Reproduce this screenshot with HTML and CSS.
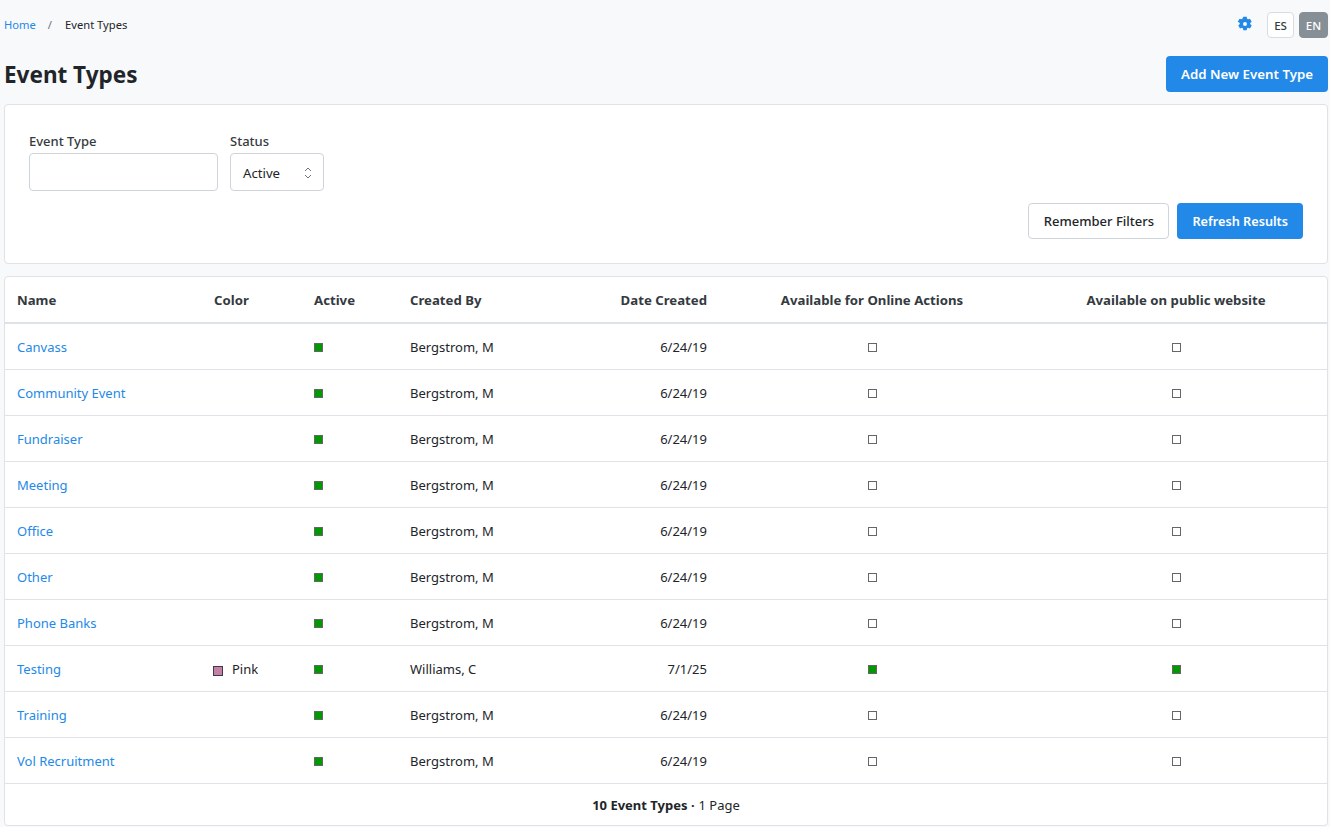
FILE: index.html
```html
<!DOCTYPE html>
<html lang="en">
<head>
<meta charset="utf-8">
<title>Event Types</title>
<link rel="stylesheet" href="styles.css">
</head>
<body>
<div class="page">
  <header class="topbar">
    <nav class="crumbs"><a href="#">Home</a><span class="sep">/</span><span>Event Types</span></nav>
    <div class="tools">
      <svg class="gear" viewBox="0 0 16 16" width="16" height="16" aria-hidden="true"><path fill="#2389e8" fill-rule="evenodd" d="M6.3.8h3.4l.4 2c.35.15.65.32.95.55l1.95-.65 1.7 2.95-1.5 1.35a4.4 4.4 0 0 1 0 1.1l1.5 1.35-1.7 2.95-1.95-.65c-.3.23-.6.4-.95.55l-.4 2H6.300l-.4-2a4.400 4.400 0 0 1-.95-.55l-1.950.65-1.700-2.950 1.500-1.350a4.400 4.400 0 0 1 0-1.100L.800 5.650l1.700-2.950 1.950.65c.3-.23.6-.4.95-.55zM8 6a2 2 0 1 0 0 4 2 2 0 0 0 0-4z"/></svg>
      <div class="langs"><button class="lang">ES</button><button class="lang lang-on">EN</button></div>
    </div>
  </header>
  <div class="titlebar">
    <h1>Event Types</h1>
    <button class="btn btn-primary btn-add">Add New Event Type</button>
  </div>
  <section class="card filters">
    <div class="fields">
      <label class="field"><span class="label">Event Type</span><input class="input" type="text"></label>
      <div class="field"><span class="label">Status</span>
        <div class="select">Active
          <svg viewBox="0 0 10 14" width="10" height="14" aria-hidden="true"><path d="M2 5l3-3 3 3M2 9l3 3 3-3" fill="none" stroke="#6b7280" stroke-width="1"/></svg>
        </div>
      </div>
    </div>
    <div class="actions">
      <button class="btn btn-plain">Remember Filters</button>
      <button class="btn btn-primary btn-refresh">Refresh Results</button>
    </div>
  </section>
  <section class="card results">
    <table>
      <colgroup><col class="c1"><col class="c2"><col class="c3"><col class="c4"><col class="c5"><col class="c6"><col class="c7"></colgroup>
      <thead><tr><th>Name</th><th>Color</th><th>Active</th><th>Created By</th><th class="r">Date Created</th><th class="m">Available for Online Actions</th><th class="m">Available on public website</th></tr></thead>
      <tbody>
        <tr><td><a href="#">Canvass</a></td><td></td><td><i class="box on"></i></td><td>Bergstrom, M</td><td class="r">6/24/19</td><td class="m"><i class="box"></i></td><td class="m"><i class="box"></i></td></tr>
        <tr><td><a href="#">Community Event</a></td><td></td><td><i class="box on"></i></td><td>Bergstrom, M</td><td class="r">6/24/19</td><td class="m"><i class="box"></i></td><td class="m"><i class="box"></i></td></tr>
        <tr><td><a href="#">Fundraiser</a></td><td></td><td><i class="box on"></i></td><td>Bergstrom, M</td><td class="r">6/24/19</td><td class="m"><i class="box"></i></td><td class="m"><i class="box"></i></td></tr>
        <tr><td><a href="#">Meeting</a></td><td></td><td><i class="box on"></i></td><td>Bergstrom, M</td><td class="r">6/24/19</td><td class="m"><i class="box"></i></td><td class="m"><i class="box"></i></td></tr>
        <tr><td><a href="#">Office</a></td><td></td><td><i class="box on"></i></td><td>Bergstrom, M</td><td class="r">6/24/19</td><td class="m"><i class="box"></i></td><td class="m"><i class="box"></i></td></tr>
        <tr><td><a href="#">Other</a></td><td></td><td><i class="box on"></i></td><td>Bergstrom, M</td><td class="r">6/24/19</td><td class="m"><i class="box"></i></td><td class="m"><i class="box"></i></td></tr>
        <tr><td><a href="#">Phone Banks</a></td><td></td><td><i class="box on"></i></td><td>Bergstrom, M</td><td class="r">6/24/19</td><td class="m"><i class="box"></i></td><td class="m"><i class="box"></i></td></tr>
        <tr><td><a href="#">Testing</a></td><td><span class="swatch"></span>Pink</td><td><i class="box on"></i></td><td>Williams, C</td><td class="r">7/1/25</td><td class="m"><i class="box on"></i></td><td class="m"><i class="box on"></i></td></tr>
        <tr><td><a href="#">Training</a></td><td></td><td><i class="box on"></i></td><td>Bergstrom, M</td><td class="r">6/24/19</td><td class="m"><i class="box"></i></td><td class="m"><i class="box"></i></td></tr>
        <tr><td><a href="#">Vol Recruitment</a></td><td></td><td><i class="box on"></i></td><td>Bergstrom, M</td><td class="r">6/24/19</td><td class="m"><i class="box"></i></td><td class="m"><i class="box"></i></td></tr>
      </tbody>
    </table>
    <footer class="summary"><b>10 Event Types ·</b> 1 Page</footer>
  </section>
</div>
</body>
</html>
```
FILE: styles.css
```css
* { box-sizing: border-box; }
html, body { margin: 0; padding: 0; }
body {
  background: #f8f9fb;
  color: #212529;
  font-family: "Noto Sans", "Open Sans", sans-serif;
  font-size: 13px;
  line-height: 18px;
}
a { color: #2389e8; text-decoration: none; }
.page { padding: 0 2px 0 4px; height: 827px; overflow: hidden; }
.topbar { display: flex; justify-content: space-between; align-items: center; height: 50px; }
.crumbs { font-size: 11.2px; display: flex; align-items: center; }
.sep { margin: 0 13px 0 12px; color: #6c757d; }
.tools { display: flex; align-items: center; gap: 14px; }
.gear { display: block; margin-top: -2px; }
.langs { display: flex; gap: 5px; }
.lang { width: 27px; height: 26px; padding: 0; border: 1px solid #d9dce1; border-radius: 4px; background: #fff; color: #343a40; font: 500 11.5px "Noto Sans", sans-serif; }
.lang-on { background: #868e96; border-color: #868e96; color: #fff; width: 29px; }
.titlebar { display: flex; justify-content: space-between; align-items: center; height: 36px; margin-top: 6px; margin-bottom: 12px; }
h1 { margin: 0; padding-top: 2px; font-size: 22.5px; line-height: 36px; font-weight: 700; }
.btn { height: 36px; border-radius: 4px; font: 500 13px "Noto Sans", sans-serif; padding: 0 14px; border: 1px solid transparent; cursor: pointer; white-space: nowrap; }
.btn-primary { background: #2389e8; color: #fff; }
.btn-add { width: 162px; font-size: 13.3px; font-weight: 600; }
.btn-refresh { font-size: 12.7px; font-weight: 600; }
.btn-plain { background: #fff; border-color: #ced4da; color: #212529; width: 141px; }
.card { background: #fff; border: 1px solid #dfe2e6; border-radius: 4px; }
.filters { height: 160px; padding: 26px 24px 24px; margin-bottom: 12px; }
.fields { display: flex; gap: 12px; }
.field { display: flex; flex-direction: column; }
.label { font-weight: 500; font-size: 13px; line-height: 20px; margin-bottom: 2px; color: #343a40; }
.input { width: 189px; height: 38px; border: 1px solid #ced4da; border-radius: 4px; background: #fff; }
.select { width: 94px; height: 38px; border: 1px solid #ced4da; border-radius: 4px; background: #fff; padding: 2px 10px 0 12px; display: flex; align-items: center; justify-content: space-between; font-size: 13.2px; }
.actions { display: flex; justify-content: flex-end; gap: 8px; margin-top: 12px; }
.results { height: 550px; overflow: hidden; }
table { width: 100%; table-layout: fixed; border-collapse: collapse; }
.c1 { width: 197px; } .c2 { width: 100px; } .c3 { width: 96px; } .c4 { width: 163px; } .c5 { width: 158px; } .c6 { width: 306px; }
th { height: 46px; padding: 0 12px; text-align: left; font-weight: 700; font-size: 13.2px; border-bottom: 2px solid #dfe2e6; color: #343a40; }
td { height: 46px; padding: 2px 12px 0; border-bottom: 1px solid #dfe2e6; }
.r { text-align: right; }
.m { text-align: center; }
.box { display: inline-block; width: 9px; height: 9px; border: 1px solid #666; background: #fff; vertical-align: 0; }
.box.on { background: #009900; }
.swatch { display: inline-block; width: 10px; height: 10px; border: 1px solid #3d3d4a; background: #c87fa6; margin: 0 9px 0 -1px; vertical-align: -2px; }
.summary { height: 42px; display: flex; align-items: center; justify-content: center; gap: 4px; padding-top: 1px; }
.summary b { font-weight: 700; }
```
